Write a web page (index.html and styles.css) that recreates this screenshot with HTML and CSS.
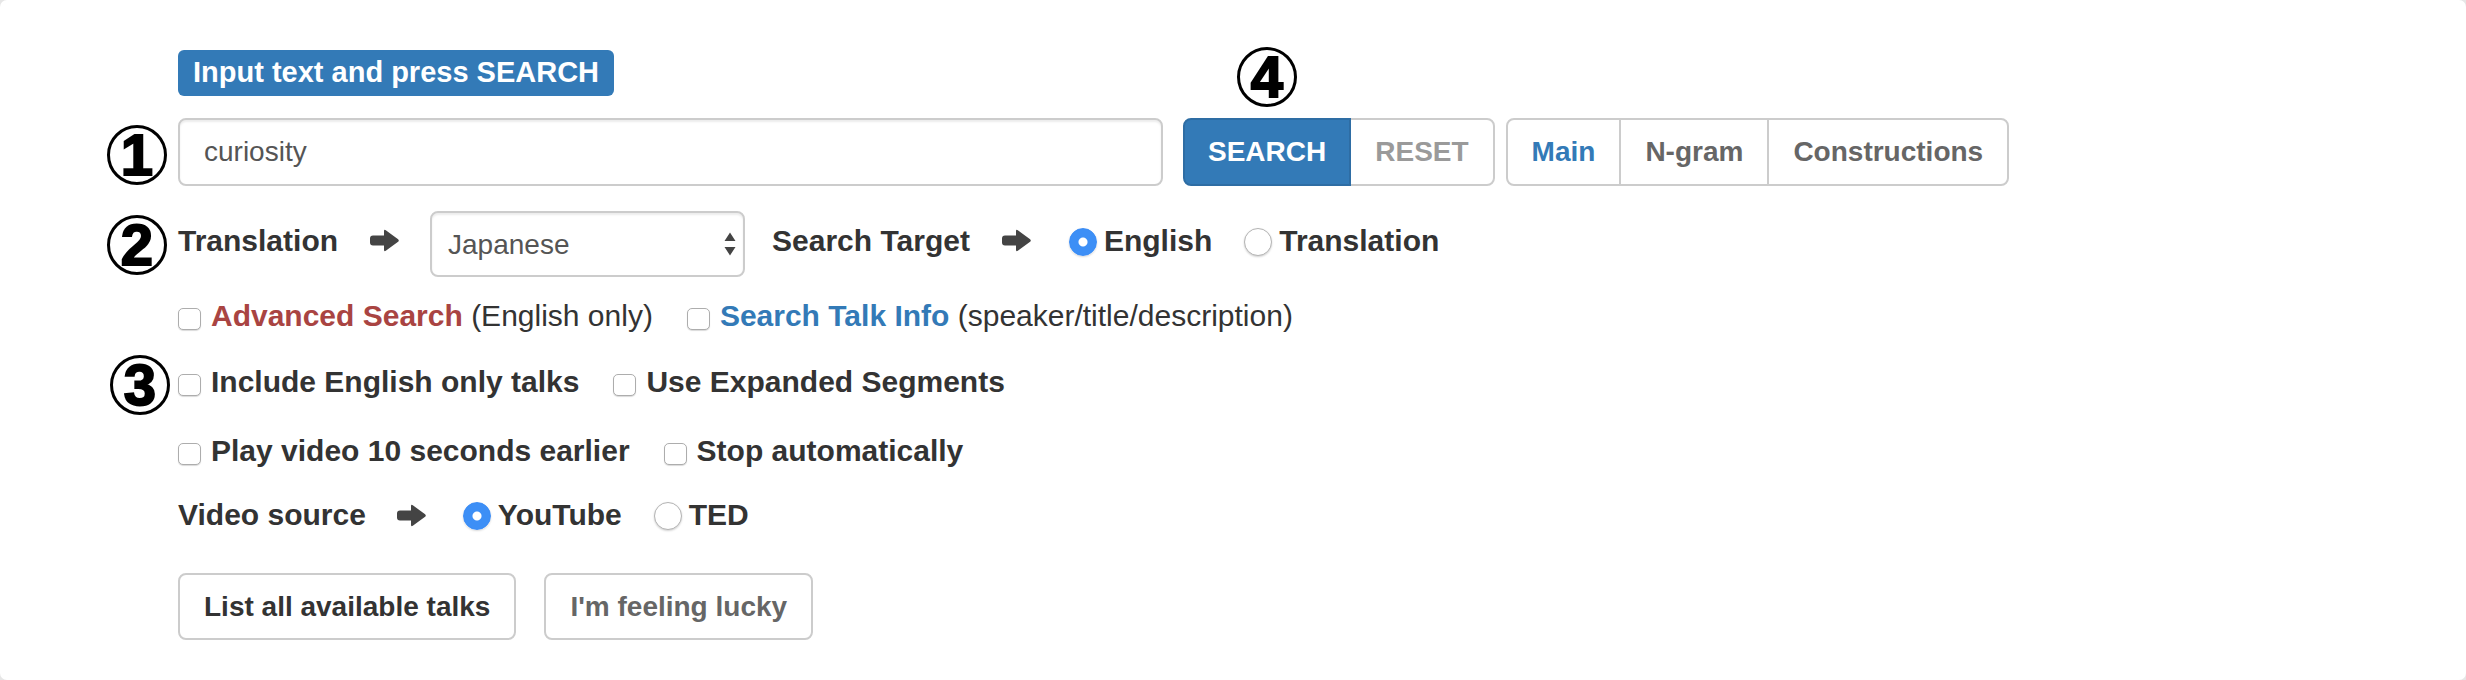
FILE: index.html
```html
<!DOCTYPE html>
<html lang="en">
<head>
<meta charset="utf-8">
<title>Search</title>
<link rel="stylesheet" href="styles.css">
</head>
<body>
<div class="card">
  <div class="hint-row"><span class="badge">Input text and press SEARCH</span></div>

  <div class="row row-search">
    <span class="mark mark-1">1</span>
    <input class="query" type="text" value="curiosity">
    <div class="btn-group search-group">
      <span class="mark mark-4">4</span>
      <button class="btn btn-primary">SEARCH</button>
      <button class="btn btn-reset">RESET</button>
    </div>
    <div class="btn-group nav-group">
      <button class="btn btn-nav active">Main</button>
      <button class="btn btn-nav">N-gram</button>
      <button class="btn btn-nav">Constructions</button>
    </div>
  </div>

  <div class="row row-lang">
    <span class="mark mark-2">2</span>
    <span class="label lift">Translation</span>
    <svg class="arrow lift" viewBox="0 0 29 23"><path d="M3 6.5H14V2.2Q14 0 15.8 1.3L28.1 10.2Q29.5 11.5 28.1 12.8L15.8 21.7Q14 23 14 20.8V16.5H3Q0 16.5 0 13.5V9.5Q0 6.5 3 6.5Z"/></svg>
    <div class="select-wrap">
      <select class="select"><option>Japanese</option></select>
      <svg class="caret" viewBox="0 0 14 28"><path d="M1.5 11L7 2.5L12.5 11Z M1.5 17L7 25.5L12.5 17Z"/></svg>
    </div>
    <span class="label label-target lift">Search Target</span>
    <svg class="arrow lift" viewBox="0 0 29 23"><path d="M3 6.5H14V2.2Q14 0 15.8 1.3L28.1 10.2Q29.5 11.5 28.1 12.8L15.8 21.7Q14 23 14 20.8V16.5H3Q0 16.5 0 13.5V9.5Q0 6.5 3 6.5Z"/></svg>
    <div class="choices lift">
      <label class="choice"><input class="radio" type="radio" name="target" checked>English</label>
      <label class="choice"><input class="radio" type="radio" name="target">Translation</label>
    </div>
  </div>

  <div class="row row-opts row-adv">
    <label class="check"><input class="checkbox" type="checkbox"><span class="adv">Advanced Search</span>&nbsp;<span class="plain">(English only)</span></label>
    <label class="check"><input class="checkbox" type="checkbox"><span class="info">Search Talk Info</span>&nbsp;<span class="plain">(speaker/title/description)</span></label>
  </div>

  <div class="row row-opts row-talks">
    <span class="mark mark-3">3</span>
    <label class="check"><input class="checkbox" type="checkbox">Include English only talks</label>
    <label class="check"><input class="checkbox" type="checkbox">Use Expanded Segments</label>
  </div>

  <div class="row row-opts row-play">
    <label class="check"><input class="checkbox" type="checkbox">Play video 10 seconds earlier</label>
    <label class="check check-stop"><input class="checkbox" type="checkbox">Stop automatically</label>
  </div>

  <div class="row row-opts row-video">
    <span class="label">Video source</span>
    <svg class="arrow" viewBox="0 0 29 23"><path d="M3 6.5H14V2.2Q14 0 15.8 1.3L28.1 10.2Q29.5 11.5 28.1 12.8L15.8 21.7Q14 23 14 20.8V16.5H3Q0 16.5 0 13.5V9.5Q0 6.5 3 6.5Z"/></svg>
    <div class="choices">
      <label class="choice"><input class="radio" type="radio" name="video" checked>YouTube</label>
      <label class="choice"><input class="radio" type="radio" name="video">TED</label>
    </div>
  </div>

  <div class="row row-actions">
    <button class="btn btn-default">List all available talks</button>
    <button class="btn btn-default btn-lucky">I'm feeling lucky</button>
  </div>
</div>
</body>
</html>
```

FILE: styles.css
```css
html, body {
  margin: 0;
  height: 100%;
  overflow: hidden;
  background: #e6e6e6;
}

body {
  font-family: "Liberation Sans", Arial, sans-serif;
  color: #333;
}

.card {
  box-sizing: border-box;
  height: 100vh;
  background: #fff;
  border-radius: 7px;
  padding: 50px 0 0 178px;
}

.hint-row {
  display: flex;
  height: 46px;
}

.badge {
  background: #337ab7;
  color: #fff;
  font-weight: bold;
  font-size: 29px;
  line-height: 32px;
  padding: 6px 15px 8px;
  border-radius: 6px;
}

.row {
  display: flex;
  align-items: center;
  position: relative;
}

/* annotation marks */
.mark {
  position: absolute;
  box-sizing: border-box;
  width: 60px;
  height: 60px;
  border: 3px solid #000;
  border-radius: 50%;
  background: #fff;
  display: flex;
  align-items: center;
  justify-content: center;
  font: bold 58px/1 "Liberation Sans", Arial, sans-serif;
  color: #000;
  -webkit-text-stroke: 2px #000;
  z-index: 3;
}
.mark-1 { left: -71px; top: 7px; }
.mark-2 { left: -71px; top: 4px; }
.mark-3 { left: -68px; top: -7px; }
.mark-4 { left: 54px; top: -71px; }

/* search row */
.row-search {
  margin-top: 22px;
  height: 68px;
}

.query {
  box-sizing: border-box;
  width: 985px;
  height: 68px;
  margin: 0;
  padding: 0 24px;
  border: 2px solid #ccc;
  border-radius: 8px;
  box-shadow: inset 0 2px 2px rgba(0, 0, 0, 0.075);
  font: 28px "Liberation Sans", Arial, sans-serif;
  color: #555;
  outline: none;
}

.btn-group {
  display: flex;
  position: relative;
}
.search-group { margin-left: 20px; }
.nav-group { margin-left: 11px; }

.btn {
  box-sizing: border-box;
  height: 68px;
  margin: 0;
  padding: 0 24px;
  border: 2px solid #ccc;
  border-radius: 8px;
  background: #fff;
  font: bold 28px/40px "Liberation Sans", Arial, sans-serif;
  color: #333;
  cursor: pointer;
}

.btn-group .btn { border-radius: 0; }
.btn-group .btn + .btn { margin-left: -2px; }
.btn-group .btn:first-of-type { border-radius: 8px 0 0 8px; }
.btn-group .btn:last-child { border-radius: 0 8px 8px 0; }

.btn-primary {
  position: relative;
  z-index: 1;
  padding: 0 23px;
  background: #337ab7;
  border-color: #2e6da4;
  color: #fff;
}
.btn-reset { color: #9a9a9a; }
.btn-nav { color: #666; }
.btn-nav.active { color: #337ab7; }

/* translation row */
.row-lang {
  margin-top: 25px;
  height: 66px;
}

.lift { margin-bottom: 7px; }

.label {
  font-weight: bold;
  font-size: 30px;
  line-height: 40px;
}

.arrow {
  width: 29px;
  height: 23px;
  margin-left: 32px;
  fill: #444;
  flex: none;
}

.select-wrap {
  position: relative;
  width: 315px;
  height: 66px;
  margin-left: 31px;
}

.select {
  appearance: none;
  -webkit-appearance: none;
  box-sizing: border-box;
  width: 100%;
  height: 100%;
  margin: 0;
  padding: 0 16px;
  border: 2px solid #ccc;
  border-radius: 8px;
  background: #fff;
  box-shadow: inset 0 2px 2px rgba(0, 0, 0, 0.075);
  font: 28px "Liberation Sans", Arial, sans-serif;
  color: #555;
}

.caret {
  position: absolute;
  right: 8px;
  top: 19px;
  width: 14px;
  height: 28px;
  fill: #444;
  pointer-events: none;
}

.label-target { margin-left: 27px; }

.choices {
  display: flex;
  align-items: center;
  margin-left: 38px;
}

.choice {
  display: flex;
  align-items: center;
  font-weight: bold;
  font-size: 30px;
  line-height: 40px;
}
.choice + .choice { margin-left: 32px; }

.radio {
  appearance: none;
  -webkit-appearance: none;
  box-sizing: border-box;
  width: 28px;
  height: 28px;
  margin: 2px 7px 0 0;
  border: 1px solid #b4b4b4;
  border-radius: 50%;
  background: #fff;
  box-shadow: 0 1px 2px rgba(0, 0, 0, 0.18);
  flex: none;
}
.radio:checked {
  border-color: #3b8cf5;
  background: radial-gradient(circle, #fff 0 4px, #3d8ff6 5px);
  box-shadow: 0 1px 2px rgba(0, 0, 0, 0.15);
}

/* option rows */
.row-opts { height: 40px; }
.row-adv { margin-top: 19px; }
.row-talks { margin-top: 26px; }
.row-play { margin-top: 29px; }
.row-video { margin-top: 24px; }

.check {
  display: flex;
  align-items: center;
  font-weight: bold;
  font-size: 30px;
  line-height: 40px;
}
.check + .check { margin-left: 34px; }

.checkbox {
  appearance: none;
  -webkit-appearance: none;
  box-sizing: border-box;
  width: 23px;
  height: 22px;
  margin: 5px 10px 0 0;
  border: 1px solid #adadad;
  border-radius: 5px;
  background: #fff;
  box-shadow: 0 1px 1px rgba(0, 0, 0, 0.15);
  flex: none;
}

.adv { color: #a94442; }
.info { color: #337ab7; }
.plain { font-weight: normal; }

.row-video .arrow { margin-left: 31px; }
.row-video .choices { margin-left: 37px; }

/* action buttons */
.row-actions {
  margin-top: 38px;
}
.row-actions .btn { height: 67px; padding: 0 24px; }
.btn-lucky {
  margin-left: 28px;
  color: #666;
}
```
